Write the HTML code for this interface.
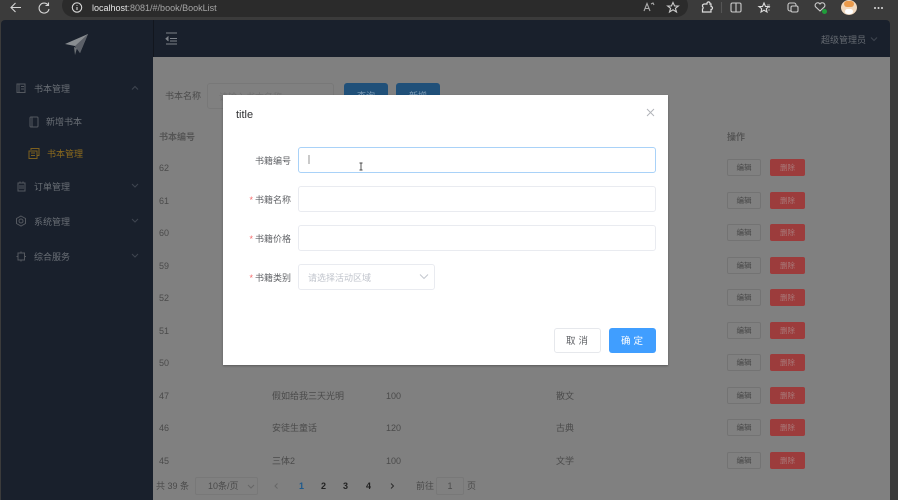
<!DOCTYPE html>
<html lang="zh"><head><meta charset="utf-8"><title>BookList</title>
<style>
*{box-sizing:border-box}
html,body{margin:0;padding:0;width:898px;height:500px;overflow:hidden;background:#3b3b3b;font-family:"Liberation Sans","Noto Sans CJK SC",sans-serif}
.a{position:absolute;white-space:nowrap}
svg{position:absolute;overflow:visible;fill:none}
.t{font-size:9px;color:#4a4a4a;line-height:12px;transform:translateY(1px)}
.mi{font-size:9px;color:#6a6f76;line-height:12px;transform:translateY(1px)}
.eb{position:absolute;left:727px;width:34px;height:17px;border:1px solid #737373;border-radius:2px;color:#454545;font-size:7.5px;line-height:15px;text-align:center}
.db{position:absolute;left:770px;width:35px;height:17px;background:#9c3c3c;border-radius:2px;color:#a87a7a;font-size:7.5px;line-height:17px;text-align:center}
.inp{position:absolute;left:298px;width:358px;height:26px;border:1px solid #e9ebf0;border-radius:3px;background:#fff}
.lb{position:absolute;left:223px;width:68px;text-align:right;font-size:9px;color:#606266;line-height:12px;transform:translateY(1px)}
.lb i{color:#f56c6c;font-style:normal;margin-right:2px}
</style></head><body>

<!-- browser chrome -->
<div class="a" style="left:0;top:0;width:898px;height:20px;background:#3b3b3b"></div>
<div class="a" style="left:62px;top:-6px;width:626px;height:23px;background:#2b2b2b;border-radius:12px"></div>
<svg style="left:0;top:0" width="898" height="20" stroke="#d6d6d6" stroke-width="1.1">
<path d="M21 7.500H11M15.500 3L11 7.500L15.500 12"/>
<path d="M48 5A5 5 0 1 0 49 9M48.500 2.500V5.500H45.500"/>
<circle cx="77" cy="7.500" r="4.700"/><path d="M77 7V10M77 5V5.800"/>
<path d="M644 11L647 3.500L650 11M645 8.500H649M651 4L653 3L654 5" stroke="#aaa"/>
<path d="M673 2.500L674.600 6H678.300L675.400 8.300L676.500 12L673 9.800L669.500 12L670.600 8.300L667.700 6H671.400Z" stroke="#ccc"/>
<path d="M704 4H707V3A1.500 1.500 0 0 1 710 4H711V6.500A1.500 1.500 0 0 1 711 9.500V12H702.500V9A1.500 1.500 0 0 0 702.500 6.500V5Z" stroke="#ddd" stroke-width="1.200"/>
<path d="M721.500 2V13" stroke="#555"/>
<rect x="731" y="3" width="10" height="9" rx="1.500" stroke="#ccc"/><path d="M736 3V12" stroke="#ccc"/>
<path d="M764 3L765.500 6.500H769L766.300 8.700L767 12L764 10.200L761 12L761.700 8.700L759 6.500H762.500Z" stroke="#ddd"/><path d="M767 5H770M768 7.500H770M768 10H770" stroke="#999"/>
<rect x="788" y="3" width="8" height="8" rx="2" stroke="#ccc"/><rect x="791" y="6" width="7" height="6" rx="1.500" fill="#3b3b3b" stroke="#ccc"/>
<path d="M820 11L815.500 6.800A2.600 2.600 0 0 1 820 4A2.600 2.600 0 0 1 824.500 6.800Z" stroke="#ccc"/>
</svg>
<div class="a" style="left:822px;top:9px;width:5px;height:5px;border-radius:50%;background:#1f9d3a"></div>
<div class="a" style="left:841px;top:0;width:16px;height:15px;border-radius:50%;background:#f1d9bf;overflow:hidden"><div class="a" style="left:3px;top:1px;width:10px;height:6px;background:#ea9a4b;border-radius:5px"></div><div class="a" style="left:4px;top:9px;width:8px;height:5px;background:#fff;border-radius:3px"></div></div>
<div class="a" style="left:92px;top:2px;font-size:9px;line-height:12px;color:#e6e6e6">localhost<span style="color:#a5a5a5">:8081/#/book/BookList</span></div>
<div class="a" style="left:874px;top:7px;width:2px;height:2px;background:#ddd;border-radius:50%;box-shadow:3.500px 0 #ddd,7px 0 #ddd"></div>

<!-- sidebar -->
<div class="a" style="left:1px;top:20px;width:152px;height:480px;background:#19202c;border-top-left-radius:4px"></div>
<svg style="left:0;top:0" width="153" height="280" stroke="#54585f" stroke-width="1">
<path d="M65 44L88 34L80 53L75 46Z" fill="#8a8e92" stroke="none"/>
<path d="M75 46L88 34L80 53Z" fill="#5c6068" stroke="none"/>
<path d="M74 47L77 48L75 55Z" fill="#6d7176" stroke="none"/>
<rect x="17" y="84" width="8" height="8.500"/><path d="M19 84V92.500M21 86.500H24M21 89H24"/>
<rect x="30" y="117" width="8" height="10" rx="1"/><path d="M32 117V127"/>
<g stroke="#7d601e"><rect x="29" y="151" width="8" height="7.500"/><path d="M31 150V148.500H39V155.500H37"/><path d="M31 153H35M31 155.500H35"/></g>
<rect x="18" y="183" width="7" height="8"/><path d="M20 181.500V183M23 181.500V183M19 186H24M19 188H24"/>
<path d="M21 216L25.500 218.500V223.500L21 226L16.500 223.500V218.500Z"/><circle cx="21" cy="221" r="2"/>
<rect x="18" y="253" width="6.500" height="7"/><path d="M21 251.500V253M21 260V261.500M16.500 256.500H18M24.500 256.500H26"/>
<path d="M132 89.500L135 86.500L138 89.500M132 184L135 187L138 184M132 219L135 222L138 219M132 254L135 257L138 254" stroke="#3f4550"/>
</svg>
<div class="a mi" style="left:34px;top:82px">书本管理</div>
<div class="a mi" style="left:46px;top:115px">新增书本</div>
<div class="a mi" style="left:47px;top:147px;color:#8e6c1d">书本管理</div>
<div class="a mi" style="left:34px;top:180px">订单管理</div>
<div class="a mi" style="left:34px;top:215px">系统管理</div>
<div class="a mi" style="left:34px;top:250px">综合服务</div>

<!-- header -->
<div class="a" style="left:153px;top:20px;width:737px;height:37px;background:#19202c;border-top-right-radius:4px;border-left:1px solid #12161e"></div>
<svg style="left:0;top:0" width="898" height="60" stroke="#7d8289" stroke-width="1">
<path d="M166 33H177M170 38.500H177M170 41H177M166 44H177"/><path d="M168.500 36.500L166 38.800L168.500 41" fill="#7d8289"/>
<path d="M871 37.500L874 40.500L877 37.500" stroke="#3f4550"/>
</svg>
<div class="a mi" style="left:821px;top:33px;color:#666b72">超级管理员</div>

<!-- content -->
<div class="a" style="left:153px;top:57px;width:737px;height:443px;background:#808080"></div>
<div class="a t" style="left:165px;top:89px">书本名称</div>
<div class="a" style="left:207px;top:83px;width:127px;height:26px;border:1px solid #787878;border-radius:3px"></div>
<div class="a t" style="left:219px;top:90px;color:#707070">请输入书本名称</div>
<div class="a" style="left:344px;top:83px;width:44px;height:26px;background:#205079;border-radius:3px;color:#7f9cb5;font-size:9px;line-height:26px;text-align:center">查询</div>
<div class="a" style="left:396px;top:83px;width:44px;height:26px;background:#205079;border-radius:3px;color:#7f9cb5;font-size:9px;line-height:26px;text-align:center">新增</div>

<div class="a t" style="left:159px;top:130px;font-weight:bold;color:#555">书本编号</div>
<div class="a t" style="left:727px;top:130px;font-weight:bold;color:#555">操作</div>

<div class="a t" style="left:159px;top:161px">62</div><div class="eb" style="top:159px">编辑</div><div class="db" style="top:159px">删除</div>
<div class="a t" style="left:159px;top:194px">61</div><div class="eb" style="top:192px">编辑</div><div class="db" style="top:192px">删除</div>
<div class="a t" style="left:159px;top:226px">60</div><div class="eb" style="top:224px">编辑</div><div class="db" style="top:224px">删除</div>
<div class="a t" style="left:159px;top:259px">59</div><div class="eb" style="top:257px">编辑</div><div class="db" style="top:257px">删除</div>
<div class="a t" style="left:159px;top:291px">52</div><div class="eb" style="top:289px">编辑</div><div class="db" style="top:289px">删除</div>
<div class="a t" style="left:159px;top:324px">51</div><div class="eb" style="top:322px">编辑</div><div class="db" style="top:322px">删除</div>
<div class="a t" style="left:159px;top:356px">50</div><div class="eb" style="top:354px">编辑</div><div class="db" style="top:354px">删除</div>
<div class="a t" style="left:159px;top:389px">47</div><div class="a t" style="left:272px;top:389px">假如给我三天光明</div><div class="a t" style="left:386px;top:389px">100</div><div class="a t" style="left:556px;top:389px">散文</div><div class="eb" style="top:387px">编辑</div><div class="db" style="top:387px">删除</div>
<div class="a t" style="left:159px;top:421px">46</div><div class="a t" style="left:272px;top:421px">安徒生童话</div><div class="a t" style="left:386px;top:421px">120</div><div class="a t" style="left:556px;top:421px">古典</div><div class="eb" style="top:419px">编辑</div><div class="db" style="top:419px">删除</div>
<div class="a t" style="left:159px;top:454px">45</div><div class="a t" style="left:272px;top:454px">三体2</div><div class="a t" style="left:386px;top:454px">100</div><div class="a t" style="left:556px;top:454px">文学</div><div class="eb" style="top:452px">编辑</div><div class="db" style="top:452px">删除</div>

<!-- pagination -->
<div class="a t" style="left:156px;top:479px">共 39 条</div>
<div class="a" style="left:195px;top:477px;width:63px;height:18px;border:1px solid #787878;border-radius:2px"></div>
<div class="a t" style="left:208px;top:479px">10条/页</div>
<div class="a t" style="left:299px;top:479px;font-weight:bold;color:#1e5a8c">1</div>
<div class="a t" style="left:321px;top:479px;font-weight:bold;color:#222">2</div>
<div class="a t" style="left:343px;top:479px;font-weight:bold;color:#222">3</div>
<div class="a t" style="left:366px;top:479px;font-weight:bold;color:#222">4</div>
<svg style="left:0;top:470px" width="480" height="30" stroke="#444">
<path d="M248 15L251 18L254 15" stroke="#666"/>
<path d="M277.500 13.500L275 16L277.500 18.500" stroke="#666"/>
<path d="M391 13.500L393.500 16L391 18.500" stroke="#2c2c2c"/>
</svg>
<div class="a t" style="left:416px;top:479px">前往</div>
<div class="a" style="left:436px;top:477px;width:28px;height:18px;border:1px solid #787878;border-radius:2px;font-size:9px;line-height:16px;text-align:center;color:#4a4a4a">1</div>
<div class="a t" style="left:467px;top:479px">页</div>

<!-- dialog -->
<div class="a" style="left:223px;top:95px;width:445px;height:270px;background:#fff;box-shadow:0 1px 2px rgba(0,0,0,.3)"></div>
<div class="a" style="left:236px;top:108px;font-size:11px;line-height:14px;color:#303133">title</div>
<div class="lb" style="top:154px">书籍编号</div>
<div class="inp" style="top:147px;border-color:#a9d2f8;width:358px"></div>
<div class="lb" style="top:193px"><i>*</i>书籍名称</div>
<div class="inp" style="top:186px"></div>
<div class="lb" style="top:232px"><i>*</i>书籍价格</div>
<div class="inp" style="top:225px"></div>
<div class="lb" style="top:271px"><i>*</i>书籍类别</div>
<div class="inp" style="top:264px;width:137px"></div>
<div class="a" style="left:308px;top:272px;font-size:9px;line-height:12px;color:#c0c4cc">请选择活动区域</div>
<svg style="left:0;top:0" width="898" height="300" stroke="#b0b3b8" stroke-width=".9">
<path d="M647 109L654 116M654 109L647 116"/>
<path d="M309 155V164" stroke="#888"/>
<path d="M359.500 163H362.500M361 163V170M359.500 170H362.500" stroke="#444"/>
<path d="M420 274.500L424 278.500L428 274.500" stroke="#c0c4cc"/>
</svg>
<div class="a" style="left:554px;top:328px;width:47px;height:25px;border:1px solid #e6e8ec;border-radius:3px;background:#fff;font-size:9.500px;line-height:25px;text-align:center;color:#606266;letter-spacing:3px;padding-left:2px">取消</div>
<div class="a" style="left:609px;top:328px;width:47px;height:25px;border-radius:3px;background:#409eff;font-size:9.500px;line-height:27px;text-align:center;color:#fff;letter-spacing:3px;padding-left:2px">确定</div>

</body></html>
